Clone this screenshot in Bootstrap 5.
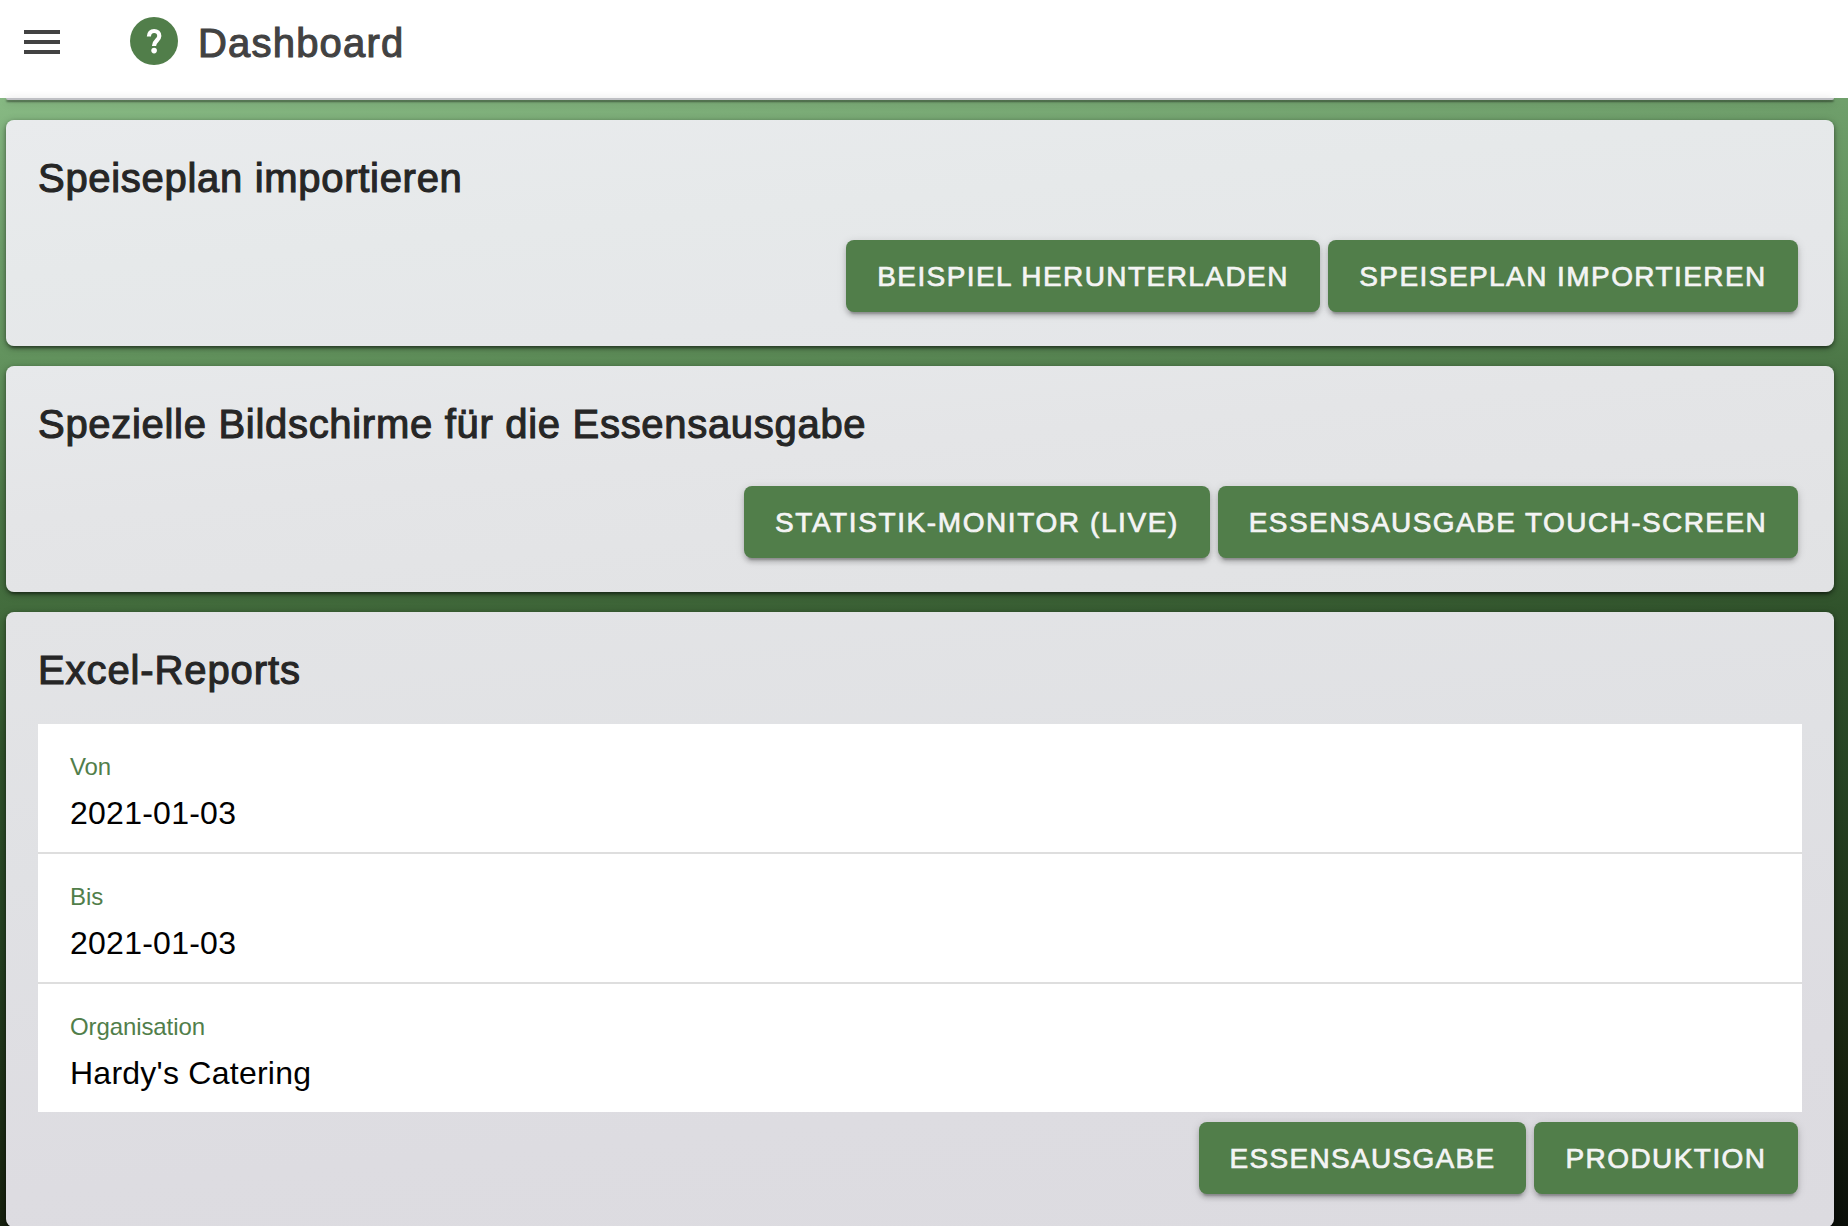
<!DOCTYPE html>
<html lang="de">
<head>
    <meta charset="UTF-8">
    <meta name="viewport" content="width=device-width, initial-scale=1.0">
    <title>Dashboard</title>

    <!-- Bootstrap CSS -->
    <link href="https://cdn.jsdelivr.net/npm/bootstrap@5.3.0/dist/css/bootstrap.min.css" rel="stylesheet">

    <style>
        body {
            height: 100vh;
            font-family: "Liberation Sans", Arial, sans-serif;
            color: #000;
            /* Verlauf von hellgrün nach fast schwarz */
            background: linear-gradient(175.5deg, #88ba84 7%, #6f9f6b 18%, #61915c 27%, #4c7747 37%, #426b3c 45%, #30522b 55%, #264323 67%, #18230f 88%, #0a0e09 100%);
        }

        /* Kopfzeile */
        .top-bar {
            height: 98px;
            padding: 0 24px;
        }

        .menu-btn {
            width: 36px;
            height: 24px;
            margin-top: 30px;
        }

        .help-icon {
            width: 48px;
            height: 48px;
            margin: 17px 20px 0 70px;
        }

        .page-title {
            font-size: 40px;
            line-height: 46px;
            letter-spacing: 1.2px;
            color: #424242;
            -webkit-text-stroke: 1.1px #424242;
            margin: 20px 0 0;
        }

        /* Karten */
        .page-content {
            padding: 0 14px 0 6px;
        }

        .panel {
            background-color: #e6e8ea;
            border: 0;
            border-radius: 8px;
            box-shadow: 0 6px 2px -4px rgba(0, 0, 0, 0.2), 0 2px 4px rgba(0, 0, 0, 0.4), 0 2px 10px rgba(0, 0, 0, 0.2);
            margin-bottom: 20px;
            padding: 0 32px;
        }

        .panel-rest {
            height: 2px;
            border-radius: 0 0 8px 8px;
            background-color: #bfc0c4;
            box-shadow: 0 2px 2px rgba(0, 0, 0, 0.45), 0 2px 8px rgba(0, 0, 0, 0.3);
        }

        .panel-import {
            height: 226px;
            background: linear-gradient(175deg, #e9ebed, #e6e9ea 40%, #e4e5e8);
        }

        .panel-screens {
            height: 226px;
            background: linear-gradient(175deg, #e7e9eb, #e4e5e7 40%, #e1e2e4);
        }

        .panel-reports {
            height: 615px;
            margin-bottom: 0;
            background: linear-gradient(175deg, #e3e4e6, #e0e1e4 35%, #dddce1 75%, #dcdbe0);
        }

        .panel-title {
            font-size: 40px;
            line-height: 46px;
            letter-spacing: 0.7px;
            color: #262626;
            -webkit-text-stroke: 1.1px #262626;
            margin: 35px 0 39px;
        }

        .panel-reports .panel-title {
            letter-spacing: 0.9px;
            margin-bottom: 31px;
        }

        .actions {
            gap: 8px;
            padding-right: 4px;
        }

        .btn-action {
            height: 72px;
            padding: 1px 29px 0;
            font-size: 28px;
            line-height: 71px;
            letter-spacing: 1.43px;
            color: #f4f4f4;
            -webkit-text-stroke: 0.7px #f4f4f4;
            background-color: #517e4a;
            border: 0;
            border-radius: 8px;
            box-shadow: 0 6px 2px -4px rgba(0, 0, 0, 0.2), 0 4px 4px rgba(0, 0, 0, 0.16), 0 2px 10px rgba(0, 0, 0, 0.14);
        }

        .btn-action:hover {
            color: #fff;
            background-color: #476f41;
        }

        .w-sample { width: 474px; }
        .w-import { width: 470px; }
        .w-monitor { width: 466px; letter-spacing: 1.6px; }
        .w-touch { width: 580px; }
        .w-meals { width: 327px; letter-spacing: 1.3px; }
        .w-production { width: 264px; }

        /* Formularfelder */
        .field {
            height: 130px;
            padding: 29px 32px 0;
            border-bottom: 2px solid #dedede;
        }

        .field:last-child {
            height: 128px;
            border-bottom: 0;
        }

        .field-label {
            display: block;
            font-size: 24px;
            line-height: 28px;
            letter-spacing: -0.1px;
            color: #517e4a;
        }

        .field-value {
            font-size: 32px;
            line-height: 36px;
            letter-spacing: 0.25px;
            margin-top: 14px;
        }

        .fields + .actions {
            margin-top: 10px;
        }
    </style>
</head>
<body class="overflow-hidden">
    <!-- Kopfzeile -->
    <header class="top-bar bg-white d-flex align-items-start">
        <button class="menu-btn btn p-0 border-0 rounded-0 d-flex" type="button" aria-label="Menü">
            <svg width="36" height="24" viewBox="0 0 36 24" fill="#424242">
                <path d="M0 0h36v4H0zM0 10h36v4H0zM0 20h36v4H0z"/>
            </svg>
        </button>
        <svg class="help-icon" viewBox="0 0 48 48">
            <circle cx="24" cy="24" r="24" fill="#517e4a"/>
            <path d="M18.9 19.6c0-3.6 2.2-5.6 5.2-5.6s5.2 2 5.2 5c0 4.3-5.3 4.6-5.3 10" fill="none" stroke="#fff" stroke-width="4.2"/>
            <circle cx="24.1" cy="33.6" r="2.8" fill="#fff"/>
        </svg>
        <h1 class="page-title">Dashboard</h1>
    </header>

    <main class="page-content">
        <div class="panel panel-rest"></div>

        <!-- Speiseplan -->
        <section class="card panel panel-import">
            <h2 class="panel-title">Speiseplan importieren</h2>
            <div class="actions d-flex justify-content-end">
                <button type="button" class="btn btn-action w-sample text-nowrap text-uppercase">Beispiel herunterladen</button>
                <button type="button" class="btn btn-action w-import text-nowrap text-uppercase">Speiseplan importieren</button>
            </div>
        </section>

        <!-- Bildschirme -->
        <section class="card panel panel-screens">
            <h2 class="panel-title">Spezielle Bildschirme für die Essensausgabe</h2>
            <div class="actions d-flex justify-content-end">
                <button type="button" class="btn btn-action w-monitor text-nowrap text-uppercase">Statistik-Monitor (Live)</button>
                <button type="button" class="btn btn-action w-touch text-nowrap text-uppercase">Essensausgabe Touch-Screen</button>
            </div>
        </section>

        <!-- Reports -->
        <section class="card panel panel-reports">
            <h2 class="panel-title">Excel-Reports</h2>
            <div class="fields bg-white">
                <div class="field">
                    <span class="field-label">Von</span>
                    <div class="field-value">2021-01-03</div>
                </div>
                <div class="field">
                    <span class="field-label">Bis</span>
                    <div class="field-value">2021-01-03</div>
                </div>
                <div class="field">
                    <span class="field-label">Organisation</span>
                    <div class="field-value">Hardy's Catering</div>
                </div>
            </div>
            <div class="actions d-flex justify-content-end">
                <button type="button" class="btn btn-action w-meals text-nowrap text-uppercase">Essensausgabe</button>
                <button type="button" class="btn btn-action w-production text-nowrap text-uppercase">Produktion</button>
            </div>
        </section>
    </main>

    <script src="https://cdn.jsdelivr.net/npm/bootstrap@5.3.0/dist/js/bootstrap.bundle.min.js"></script>
</body>
</html>
